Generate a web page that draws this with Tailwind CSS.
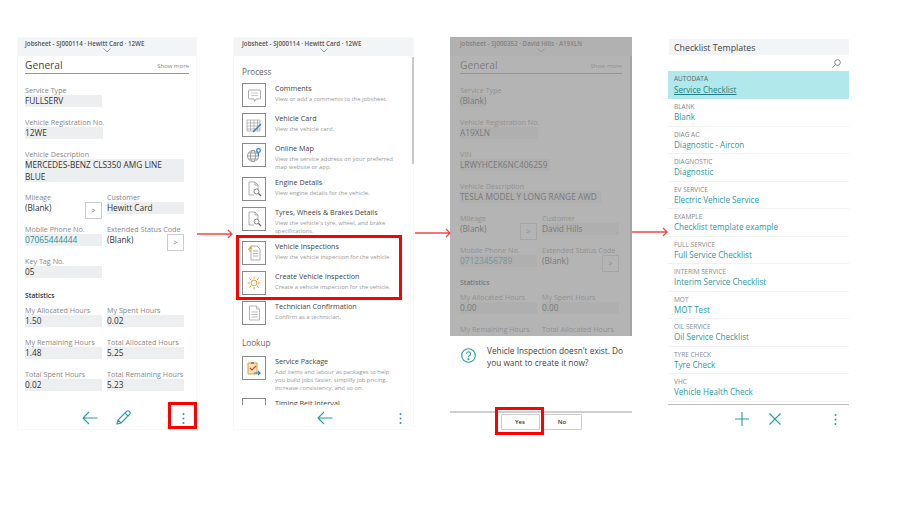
<!DOCTYPE html>
<html lang="en">
<head>
  <meta charset="UTF-8" />
  <title>Jobsheet vehicle inspection steps</title>
  <script src="https://cdn.jsdelivr.net/npm/@tailwindcss/browser@4"></script>
</head>
<body class="bg-white">
<div class="relative w-[900px] h-[506px] overflow-hidden font-['Open_Sans',sans-serif] text-[#333]">
  <div class="flex gap-[36px] pl-[17px] pt-[37px]">

    <!-- Screen 1: jobsheet -->
    <div class="w-[180px] h-[393px] flex flex-col border border-[#f8f8f8]">
      <div class="h-[18px] bg-[#f3f4f5] px-[7px] relative">
        <p class="text-[6.2px] leading-[11px] font-semibold text-[#555]">Jobsheet - SJ000114 · Hewitt Card · 12WE</p>
        <svg class="absolute left-[85px] top-[10px]" width="8" height="5" viewBox="0 0 8 5" fill="none" stroke="#777" stroke-width=".7"><path d="M.5.5 4 4 7.5.5"/></svg>
      </div>
      <div class="flex-1 px-[7px]">
        <div class="h-[18px] pt-[3px] flex items-center justify-between border-b border-[#8f9aa0]">
          <span class="text-[10.2px] text-[#444]">General</span>
          <span class="text-[6px] text-[#888]">Show more</span>
        </div>
        <div class="mt-[12px] flex flex-col gap-[11px] text-[8.3px] leading-[12px]">
          <div>
            <p class="h-[9px] leading-[9px] text-[7.2px] text-[#888]">Service Type</p>
            <p class="w-[77px] h-[12px] bg-[#edeeef]">FULLSERV</p>
          </div>
          <div>
            <p class="h-[9px] leading-[9px] text-[7.2px] text-[#888]">Vehicle Registration No.</p>
            <p class="w-[78px] h-[12px] bg-[#edeeef]">12WE</p>
          </div>
          <div>
            <p class="h-[9px] leading-[9px] text-[7.2px] text-[#888]">Vehicle Description</p>
            <p class="w-[159px] h-[23px] bg-[#edeeef]">MERCEDES-BENZ CLS350 AMG LINE BLUE</p>
          </div>
          <div class="grid grid-cols-[77px_77px] gap-x-[5px]">
            <div>
              <p class="h-[9px] leading-[9px] text-[7.2px] text-[#888]">Mileage</p>
              <div class="h-[12px] flex justify-between items-start">(Blank)
                <span class="w-[17px] h-[17px] shrink-0 border border-[#ccc] text-[7px] leading-[16px] text-center text-[#666]">&gt;</span>
              </div>
            </div>
            <div>
              <p class="h-[9px] leading-[9px] text-[7.2px] text-[#888]">Customer</p>
              <p class="h-[12px] bg-[#edeeef]">Hewitt Card</p>
            </div>
          </div>
          <div class="grid grid-cols-[77px_77px] gap-x-[5px]">
            <div>
              <p class="h-[9px] leading-[9px] text-[7.2px] text-[#888]">Mobile Phone No.</p>
              <p class="h-[12px] bg-[#edeeef] text-[#2b8f94]">07065444444</p>
            </div>
            <div>
              <p class="h-[9px] leading-[9px] text-[7.2px] text-[#888]">Extended Status Code</p>
              <div class="h-[12px] flex justify-between items-start">(Blank)
                <span class="w-[17px] h-[17px] shrink-0 border border-[#ccc] text-[7px] leading-[16px] text-center text-[#666]">&gt;</span>
              </div>
            </div>
          </div>
          <div>
            <p class="h-[9px] leading-[9px] text-[7.2px] text-[#888]">Key Tag No.</p>
            <p class="w-[77px] h-[12px] bg-[#edeeef]">05</p>
          </div>
          <p class="h-[10px] mt-[2px] leading-[10px] text-[6.8px] font-semibold">Statistics</p>
          <div class="grid grid-cols-[77px_77px] gap-x-[5px] -mt-[6px]">
            <div>
              <p class="h-[9px] leading-[9px] text-[7.2px] text-[#888]">My Allocated Hours</p>
              <p class="h-[12px] bg-[#edeeef]">1.50</p>
            </div>
            <div>
              <p class="h-[9px] leading-[9px] text-[7.2px] text-[#888]">My Spent Hours</p>
              <p class="h-[12px] bg-[#edeeef]">0.02</p>
            </div>
          </div>
          <div class="grid grid-cols-[77px_77px] gap-x-[5px]">
            <div>
              <p class="h-[9px] leading-[9px] text-[7.2px] text-[#888]">My Remaining Hours</p>
              <p class="h-[12px] bg-[#edeeef]">1.48</p>
            </div>
            <div>
              <p class="h-[9px] leading-[9px] text-[7.2px] text-[#888]">Total Allocated Hours</p>
              <p class="h-[12px] bg-[#edeeef]">5.25</p>
            </div>
          </div>
          <div class="grid grid-cols-[77px_77px] gap-x-[5px]">
            <div>
              <p class="h-[9px] leading-[9px] text-[7.2px] text-[#888]">Total Spent Hours</p>
              <p class="h-[12px] bg-[#edeeef]">0.02</p>
            </div>
            <div>
              <p class="h-[9px] leading-[9px] text-[7.2px] text-[#888]">Total Remaining Hours</p>
              <p class="h-[12px] bg-[#edeeef]">5.23</p>
            </div>
          </div>
        </div>
      </div>
      <div class="h-[30px] relative">
        <svg class="absolute left-[64px] top-[12px]" width="16" height="14" viewBox="0 0 16 14" fill="none" stroke="#2b9a9f" stroke-width="1.1"><path d="M15.5 7H1M7 1 1 7l6 6"/></svg>
        <svg class="absolute left-[98px] top-[11px]" width="15" height="15" viewBox="0 0 15 15" fill="none" stroke="#2b9a9f" stroke-width="1.1"><path d="M1 14 2 10 10.5 1.5a1.5 1.5 0 0 1 3 3L5 13zM9 3l3 3M2 10l3 3"/></svg>
        <svg class="absolute left-[164px] top-[14px]" width="3" height="11" viewBox="0 0 3 11" fill="#2b9a9f"><circle cx="1.5" cy="1" r="1"/><circle cx="1.5" cy="5.5" r="1"/><circle cx="1.5" cy="10" r="1"/></svg>
      </div>
    </div>

    <!-- Screen 2: action menu -->
    <div class="w-[181px] h-[393px] flex flex-col border border-[#f8f8f8] relative">
      <div class="h-[18px] bg-[#f3f4f5] px-[8px] relative">
        <p class="text-[6.2px] leading-[11px] font-semibold text-[#555]">Jobsheet - SJ000114 · Hewitt Card · 12WE</p>
        <svg class="absolute left-[86px] top-[10px]" width="8" height="5" viewBox="0 0 8 5" fill="none" stroke="#777" stroke-width=".7"><path d="M.5.5 4 4 7.5.5"/></svg>
      </div>
      <div class="absolute right-[-1px] top-[19px] w-[2px] h-[107px] bg-[#c9c9c9]"></div>
      <div class="h-[349px] overflow-hidden px-[8px]">
        <h2 class="h-[27px] pt-[9px] text-[8.2px] leading-[14px] text-[#666]">Process</h2>
        <div class="flex flex-col gap-[6px]">
          <div class="flex gap-[9px] min-h-[24px]">
            <div class="w-[24px] h-[24px] shrink-0 border border-[#8a8a8a] flex items-center justify-center">
              <svg width="15" height="15" viewBox="0 0 15 15" fill="none" stroke="#aaa"><path d="M2.5 2h10a1 1 0 0 1 1 1v7a1 1 0 0 1-1 1H9l-1.5 2.500L7 11H2.5a1 1 0 0 1-1-1V3a1 1 0 0 1 1-1z"/><path d="M4 5h7M4 7.5h7" stroke="#ccc"/></svg>
            </div>
            <div class="w-[124px]">
              <p class="text-[7.2px] leading-[11px] text-[#444]">Comments</p>
              <p class="mt-[1px] text-[5.9px] leading-[8px] text-[#999]">View or add a comments to the jobsheet.</p>
            </div>
          </div>
          <div class="flex gap-[9px] min-h-[24px]">
            <div class="w-[24px] h-[24px] shrink-0 border border-[#8a8a8a] flex items-center justify-center">
              <svg width="16" height="15" viewBox="0 0 16 15" fill="none" stroke="#aaa" stroke-width=".8"><path d="M1 2h13v11H1zM1 5h13M1 8h13M1 11h13M4.5 2v11M8 2v11M11.5 2v11"/><path d="M7 14 15 6" stroke="#2d7fc4" stroke-width="1.5"/></svg>
            </div>
            <div class="w-[124px]">
              <p class="text-[7.2px] leading-[11px] text-[#444]">Vehicle Card</p>
              <p class="mt-[1px] text-[5.9px] leading-[8px] text-[#999]">View the vehicle card.</p>
            </div>
          </div>
          <div class="flex gap-[9px] min-h-[24px]">
            <div class="w-[24px] h-[24px] shrink-0 border border-[#8a8a8a] flex items-center justify-center">
              <svg width="16" height="16" viewBox="0 0 16 16" fill="none" stroke="#888" stroke-width=".8"><circle cx="7" cy="9" r="5.5"/><ellipse cx="7" cy="9" rx="2.5" ry="5.5"/><path d="M1.5 9h11M2.5 6h9M2.5 12h9"/><circle cx="12.5" cy="3.5" r="1.8" stroke="#2d7fc4" stroke-width="1.2"/><path d="M12.5 5.5V9" stroke="#2d7fc4" stroke-width="1.2"/></svg>
            </div>
            <div class="w-[124px]">
              <p class="text-[7.2px] leading-[11px] text-[#444]">Online Map</p>
              <p class="mt-[1px] text-[5.9px] leading-[8px] text-[#999]">View the service address on your preferred map website or app.</p>
            </div>
          </div>
          <div class="flex gap-[9px] min-h-[24px]">
            <div class="w-[24px] h-[24px] shrink-0 border border-[#8a8a8a] flex items-center justify-center">
              <svg width="15" height="16" viewBox="0 0 15 16" fill="none" stroke="#999" stroke-width=".8"><path d="M2 1h6l3 3v4M8 1v3h3M2 1v13h5"/><circle cx="9.5" cy="10.5" r="2.5" stroke="#666"/><path d="m11.5 12.5 2.5 2.5" stroke="#666" stroke-width="1.2"/></svg>
            </div>
            <div class="w-[124px]">
              <p class="text-[7.2px] leading-[11px] text-[#444]">Engine Details</p>
              <p class="mt-[1px] text-[5.9px] leading-[8px] text-[#999]">View engine details for the vehicle.</p>
            </div>
          </div>
          <div class="flex gap-[9px] min-h-[24px]">
            <div class="w-[24px] h-[24px] shrink-0 border border-[#8a8a8a] flex items-center justify-center">
              <svg width="15" height="16" viewBox="0 0 15 16" fill="none" stroke="#999" stroke-width=".8"><path d="M2 1h6l3 3v4M8 1v3h3M2 1v13h5"/><circle cx="9.5" cy="10.5" r="2.5" stroke="#666"/><path d="m11.5 12.5 2.5 2.5" stroke="#666" stroke-width="1.2"/></svg>
            </div>
            <div class="w-[124px]">
              <p class="text-[7.2px] leading-[11px] text-[#444]">Tyres, Wheels &amp; Brakes Details</p>
              <p class="mt-[1px] text-[5.9px] leading-[8px] text-[#999]">View the vehicle's tyre, wheel, and brake specifications.</p>
            </div>
          </div>
          <div class="flex gap-[9px] min-h-[24px]">
            <div class="w-[24px] h-[24px] shrink-0 border border-[#8a8a8a] flex items-center justify-center">
              <svg width="15" height="16" viewBox="0 0 15 16" fill="none" stroke="#999" stroke-width=".8"><path d="M4 1h6l3 3v11H4zM6 6h5M6 8.5h5M6 11h5"/><path d="M1 5l2.5-3L5 4M3 3v4" stroke="#e8a33d" stroke-width="1.1"/></svg>
            </div>
            <div class="w-[124px]">
              <p class="text-[7.2px] leading-[11px] text-[#444]">Vehicle Inspections</p>
              <p class="mt-[1px] text-[5.9px] leading-[8px] text-[#999]">View the vehicle inspection for the vehicle.</p>
            </div>
          </div>
          <div class="flex gap-[9px] min-h-[24px]">
            <div class="w-[24px] h-[24px] shrink-0 border border-[#8a8a8a] flex items-center justify-center">
              <svg width="14" height="14" viewBox="0 0 14 14" fill="none" stroke="#e8a33d" stroke-width="1"><circle cx="7" cy="7" r="2.8"/><path d="M7 .5V3M7 11v2.5M.5 7H3M11 7h2.5M2.4 2.4 4.2 4.2M9.8 9.8l1.8 1.8M11.6 2.4 9.8 4.2M4.2 9.8l-1.8 1.8"/></svg>
            </div>
            <div class="w-[124px]">
              <p class="text-[7.2px] leading-[11px] text-[#444]">Create Vehicle Inspection</p>
              <p class="mt-[1px] text-[5.9px] leading-[8px] text-[#999]">Create a vehicle inspection for the vehicle.</p>
            </div>
          </div>
          <div class="flex gap-[9px] min-h-[24px]">
            <div class="w-[24px] h-[24px] shrink-0 border border-[#8a8a8a] flex items-center justify-center">
              <svg width="13" height="16" viewBox="0 0 13 16" fill="none" stroke="#aaa" stroke-width=".8"><path d="M1.5 1h7l3 3v11h-10zM8.5 1v3h3M3.5 7h6M3.5 9.5h6M3.5 12h6"/></svg>
            </div>
            <div class="w-[124px]">
              <p class="text-[7.2px] leading-[11px] text-[#444]">Technician Confirmation</p>
              <p class="mt-[1px] text-[5.9px] leading-[8px] text-[#999]">Confirm as a technician.</p>
            </div>
          </div>
        </div>
        <h2 class="h-[31px] pt-[5px] flex items-center text-[8.2px] text-[#666]">Lookup</h2>
        <div class="flex flex-col gap-[6px]">
          <div class="flex gap-[9px] min-h-[24px]">
            <div class="w-[24px] h-[24px] shrink-0 border border-[#8a8a8a] flex items-center justify-center">
              <svg width="16" height="16" viewBox="0 0 16 16" fill="none"><path d="M2 3h9v11H2z" fill="#f6e3b8" stroke="#d9a441"/><path d="M5 2h3v2H5z" fill="#888"/><path d="m4 8 2 2 4-4" stroke="#d8403a" stroke-width="1.2"/><path d="M8 13h6m-2-2 2 2-2 2" stroke="#2d7fc4" stroke-width="1.2"/></svg>
            </div>
            <div class="w-[124px]">
              <p class="text-[7.2px] leading-[11px] text-[#444]">Service Package</p>
              <p class="mt-[1px] text-[5.9px] leading-[8px] text-[#999]">Add items and labour as packages to help you build jobs faster, simplify job pricing, increase consistency, and so on.</p>
            </div>
          </div>
          <div class="flex gap-[9px] min-h-[24px]">
            <div class="w-[24px] h-[24px] shrink-0 border border-[#8a8a8a]"></div>
            <p class="text-[7.2px] leading-[11px] text-[#444]">Timing Belt Interval</p>
          </div>
        </div>
      </div>
      <div class="flex-1 relative">
        <svg class="absolute left-[83px] top-[6px]" width="16" height="14" viewBox="0 0 16 14" fill="none" stroke="#2b9a9f" stroke-width="1.1"><path d="M15.5 7H1M7 1 1 7l6 6"/></svg>
        <svg class="absolute left-[165px] top-[8px]" width="3" height="11" viewBox="0 0 3 11" fill="#2b9a9f"><circle cx="1.5" cy="1" r="1"/><circle cx="1.5" cy="5.5" r="1"/><circle cx="1.5" cy="10" r="1"/></svg>
      </div>
    </div>

    <!-- Screen 3: confirm dialog over dimmed jobsheet -->
    <div class="w-[182px] h-[393px] flex flex-col">
      <div class="relative h-[299px] overflow-hidden">
        <div class="h-[19px] pt-[1px] bg-[#f3f4f5] px-[10px] relative">
          <p class="text-[6.2px] leading-[11px] font-semibold text-[#555]">Jobsheet - SJ000352 · David Hills · A19XLN</p>
          <svg class="absolute left-[87px] top-[11px]" width="8" height="5" viewBox="0 0 8 5" fill="none" stroke="#777" stroke-width=".7"><path d="M.5.5 4 4 7.5.5"/></svg>
        </div>
        <div class="absolute right-0 top-[19px] bottom-0 w-[2px] bg-[#c9c9c9]"></div>
        <div class="px-[10px]">
          <div class="h-[18px] pt-[3px] flex items-center justify-between border-b border-[#8f9aa0]">
            <span class="text-[10.2px] text-[#444]">General</span>
            <span class="text-[6px] text-[#888]">Show more</span>
          </div>
          <div class="mt-[12px] flex flex-col gap-[11px] text-[8.3px] leading-[12px]">
            <div>
              <p class="h-[9px] leading-[9px] text-[7.2px] text-[#888]">Service Type</p>
              <p class="w-fit h-[12px] bg-[#edeeef]">(Blank)</p>
            </div>
            <div>
              <p class="h-[9px] leading-[9px] text-[7.2px] text-[#888]">Vehicle Registration No.</p>
              <p class="w-[78px] h-[12px] bg-[#edeeef]">A19XLN</p>
            </div>
            <div>
              <p class="h-[9px] leading-[9px] text-[7.2px] text-[#888]">VIN</p>
              <p class="w-[90px] h-[12px] bg-[#edeeef]">LRWYHCEK6NC406259</p>
            </div>
            <div>
              <p class="h-[9px] leading-[9px] text-[7.2px] text-[#888]">Vehicle Description</p>
              <p class="w-[141px] h-[12px] bg-[#edeeef] whitespace-nowrap">TESLA MODEL Y LONG RANGE AWD</p>
            </div>
            <div class="grid grid-cols-[77px_77px] gap-x-[5px]">
              <div>
                <p class="h-[9px] leading-[9px] text-[7.2px] text-[#888]">Mileage</p>
                <div class="h-[12px] flex justify-between items-start">(Blank)
                  <span class="w-[17px] h-[17px] shrink-0 border border-[#ccc] text-[7px] leading-[16px] text-center text-[#666]">&gt;</span>
                </div>
              </div>
              <div>
                <p class="h-[9px] leading-[9px] text-[7.2px] text-[#888]">Customer</p>
                <p class="h-[12px] bg-[#edeeef]">David Hills</p>
              </div>
            </div>
            <div class="grid grid-cols-[77px_77px] gap-x-[5px]">
              <div>
                <p class="h-[9px] leading-[9px] text-[7.2px] text-[#888]">Mobile Phone No.</p>
                <p class="h-[12px] bg-[#edeeef] text-[#2b8f94]">07123456789</p>
              </div>
              <div>
                <p class="h-[9px] leading-[9px] text-[7.2px] text-[#888]">Extended Status Code</p>
                <div class="h-[12px] flex justify-between items-start">(Blank)
                  <span class="w-[17px] h-[17px] shrink-0 border border-[#ccc] text-[7px] leading-[16px] text-center text-[#666]">&gt;</span>
                </div>
              </div>
            </div>
            <p class="h-[10px] leading-[10px] text-[6.8px] font-semibold">Statistics</p>
            <div class="grid grid-cols-[77px_77px] gap-x-[5px] -mt-[6px]">
              <div>
                <p class="h-[9px] leading-[9px] text-[7.2px] text-[#888]">My Allocated Hours</p>
                <p class="h-[12px] bg-[#edeeef]">0.00</p>
              </div>
              <div>
                <p class="h-[9px] leading-[9px] text-[7.2px] text-[#888]">My Spent Hours</p>
                <p class="h-[12px] bg-[#edeeef]">0.00</p>
              </div>
            </div>
            <div class="grid grid-cols-[77px_77px] gap-x-[5px]">
              <p class="h-[9px] leading-[9px] text-[7.2px] text-[#888]">My Remaining Hours</p>
              <p class="h-[9px] leading-[9px] text-[7.2px] text-[#888]">Total Allocated Hours</p>
            </div>
          </div>
        </div>
        <div class="absolute inset-0 bg-[#949494]/70"></div>
      </div>
      <div class="h-[75px] flex items-start gap-[11px] pl-[11px] pt-[9px]">
        <svg class="mt-[3px] shrink-0" width="15" height="15" viewBox="0 0 15 15" fill="none" stroke="#2b9a9f" stroke-width="1.1"><circle cx="7.5" cy="7.5" r="6.8"/><path d="M5.5 5.8a2 2 0 1 1 3.100 1.700c-.8.5-1.100.9-1.100 1.800"/><circle cx="7.5" cy="11.3" r=".5" fill="#2b9a9f"/></svg>
        <p class="text-[8.3px] leading-[12px] text-[#444]">Vehicle Inspection doesn't exist. Do you want to create it now?</p>
      </div>
      <div class="flex-1 border-t-2 border-[#cfcfcf] flex justify-center gap-[3px] pt-[1px]">
        <button class="w-[39px] h-[16px] border border-[#ccc] rounded-[1px] text-[6px] font-semibold">Yes</button>
        <button class="w-[39px] h-[16px] border border-[#ccc] rounded-[1px] text-[6px] font-semibold">No</button>
      </div>
    </div>

    <!-- Screen 4: checklist templates -->
    <div class="w-[181px] h-[393px] flex flex-col">
      <div class="mt-[2px] ml-[1px] h-[16px] bg-[#f3f4f5] pl-[5px] text-[8.8px] leading-[19px] text-[#444]">Checklist Templates</div>
      <div class="h-[16px] flex justify-end items-center pr-[8px]">
        <svg width="9" height="9" viewBox="0 0 9 9" fill="none" stroke="#666" stroke-width=".8"><circle cx="5.5" cy="3.5" r="2.8"/><path d="M3.5 5.5 .5 8.5"/></svg>
      </div>
      <div class="h-[28px] bg-[#b0e8ec] pl-[6px] pt-[4px]">
        <p class="text-[6.5px] leading-[8px] text-[#666]">AUTODATA</p>
        <p class="text-[8.1px] leading-[13px] text-[#1f7f85] underline">Service Checklist</p>
      </div>
      <div class="h-[27.5px] border-b border-[#f2f2f2] pl-[6px] pt-[4px]">
        <p class="text-[6.5px] leading-[8px] text-[#888]">BLANK</p>
        <p class="text-[8.1px] leading-[12px] text-[#2b9a9f]">Blank</p>
      </div>
      <div class="h-[27.5px] border-b border-[#f2f2f2] pl-[6px] pt-[4px]">
        <p class="text-[6.5px] leading-[8px] text-[#888]">DIAG AC</p>
        <p class="text-[8.1px] leading-[12px] text-[#2b9a9f]">Diagnostic - Aircon</p>
      </div>
      <div class="h-[27.5px] border-b border-[#f2f2f2] pl-[6px] pt-[4px]">
        <p class="text-[6.5px] leading-[8px] text-[#888]">DIAGNOSTIC</p>
        <p class="text-[8.1px] leading-[12px] text-[#2b9a9f]">Diagnostic</p>
      </div>
      <div class="h-[27.5px] border-b border-[#f2f2f2] pl-[6px] pt-[4px]">
        <p class="text-[6.5px] leading-[8px] text-[#888]">EV SERVICE</p>
        <p class="text-[8.1px] leading-[12px] text-[#2b9a9f]">Electric Vehicle Service</p>
      </div>
      <div class="h-[27.5px] border-b border-[#f2f2f2] pl-[6px] pt-[4px]">
        <p class="text-[6.5px] leading-[8px] text-[#888]">EXAMPLE</p>
        <p class="text-[8.1px] leading-[12px] text-[#2b9a9f]">Checklist template example</p>
      </div>
      <div class="h-[27.5px] border-b border-[#f2f2f2] pl-[6px] pt-[4px]">
        <p class="text-[6.5px] leading-[8px] text-[#888]">FULL SERVICE</p>
        <p class="text-[8.1px] leading-[12px] text-[#2b9a9f]">Full Service Checklist</p>
      </div>
      <div class="h-[27.5px] border-b border-[#f2f2f2] pl-[6px] pt-[4px]">
        <p class="text-[6.5px] leading-[8px] text-[#888]">INTERIM SERVICE</p>
        <p class="text-[8.1px] leading-[12px] text-[#2b9a9f]">Interim Service Checklist</p>
      </div>
      <div class="h-[27.5px] border-b border-[#f2f2f2] pl-[6px] pt-[4px]">
        <p class="text-[6.5px] leading-[8px] text-[#888]">MOT</p>
        <p class="text-[8.1px] leading-[12px] text-[#2b9a9f]">MOT Test</p>
      </div>
      <div class="h-[27.5px] border-b border-[#f2f2f2] pl-[6px] pt-[4px]">
        <p class="text-[6.5px] leading-[8px] text-[#888]">OIL SERVICE</p>
        <p class="text-[8.1px] leading-[12px] text-[#2b9a9f]">Oil Service Checklist</p>
      </div>
      <div class="h-[27.5px] border-b border-[#f2f2f2] pl-[6px] pt-[4px]">
        <p class="text-[6.5px] leading-[8px] text-[#888]">TYRE CHECK</p>
        <p class="text-[8.1px] leading-[12px] text-[#2b9a9f]">Tyre Check</p>
      </div>
      <div class="h-[27.5px] border-b border-[#f2f2f2] pl-[6px] pt-[4px]">
        <p class="text-[6.5px] leading-[8px] text-[#888]">VHC</p>
        <p class="text-[8.1px] leading-[12px] text-[#2b9a9f]">Vehicle Health Check</p>
      </div>
      <div class="flex-1 mt-[2px] border-t border-[#bcbcbc] relative">
        <svg class="absolute left-[67px] top-[7px]" width="14" height="14" viewBox="0 0 14 14" fill="none" stroke="#2b9a9f" stroke-width="1.1"><path d="M7 0v14M0 7h14"/></svg>
        <svg class="absolute left-[101px] top-[8px]" width="12" height="12" viewBox="0 0 12 12" fill="none" stroke="#2b9a9f" stroke-width="1.1"><path d="m.5.5 11 11M11.5.5l-11 11"/></svg>
        <svg class="absolute left-[166px] top-[9px]" width="3" height="11" viewBox="0 0 3 11" fill="#2b9a9f"><circle cx="1.5" cy="1" r="1"/><circle cx="1.5" cy="5.5" r="1"/><circle cx="1.5" cy="10" r="1"/></svg>
      </div>
    </div>
  </div>

  <!-- Annotations drawn on top of the screens -->
  <div class="absolute left-[168px] top-[402px] w-[29px] h-[27px] border-[3px] border-[#ff0000]"></div>
  <div class="absolute left-[236px] top-[235px] w-[166px] h-[65px] border-[3px] border-[#ff0000]"></div>
  <div class="absolute left-[495px] top-[407px] w-[49px] h-[28px] border-[3px] border-[#ff0000]"></div>
  <svg class="absolute left-[197px] top-[229px]" width="36" height="10" viewBox="0 0 36 10" fill="none" stroke="#f2484a" stroke-width="1.3"><path d="M0 5h35M31 1l4 4-4 4"/></svg>
  <svg class="absolute left-[415px] top-[228px]" width="36" height="10" viewBox="0 0 36 10" fill="none" stroke="#f2484a" stroke-width="1.3"><path d="M0 5h35M31 1l4 4-4 4"/></svg>
  <svg class="absolute left-[632px] top-[227px]" width="36" height="10" viewBox="0 0 36 10" fill="none" stroke="#f2484a" stroke-width="1.3"><path d="M0 5h35M31 1l4 4-4 4"/></svg>
</div>
</body>
</html>
